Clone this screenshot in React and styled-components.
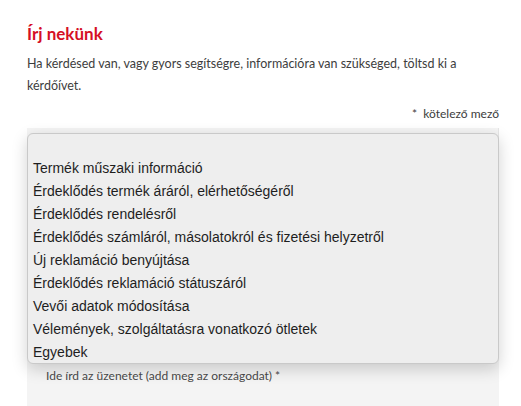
import styled, { createGlobalStyle } from "styled-components";

const GlobalStyle = createGlobalStyle`
  html, body {
    margin: 0;
    padding: 0;
    background: #ffffff;
  }
  body {
    font-family: Lato, "Open Sans", sans-serif;
    overflow: hidden;
  }
`;

const topics = [
  "",
  "Termék műszaki információ",
  "Érdeklődés termék áráról, elérhetőségéről",
  "Érdeklődés rendelésről",
  "Érdeklődés számláról, másolatokról és fizetési helyzetről",
  "Új reklamáció benyújtása",
  "Érdeklődés reklamáció státuszáról",
  "Vevői adatok módosítása",
  "Vélemények, szolgáltatásra vonatkozó ötletek",
  "Egyebek",
];

const Page = styled.div`
  position: relative;
  width: 521px;
  height: 406px;
  overflow: hidden;
  padding: 22px 22px 0 27px;
  box-sizing: border-box;
`;

const Title = styled.h2`
  margin: 0;
  font-family: Lato, sans-serif;
  font-weight: 700;
  font-size: 17px;
  line-height: 24px;
  color: #d50f25;
`;

const Intro = styled.p`
  margin: 7px 0 0;
  max-width: 460px;
  font-size: 12.5px;
  line-height: 22px;
  color: #3d3d3d;
`;

const Required = styled.div`
  margin-top: 9px;
  text-align: right;
  font-size: 12px;
  line-height: 16px;
  color: #3d3d3d;
`;

const Fields = styled.div`
  margin-top: 6px;
  display: flex;
  flex-direction: column;
  gap: 12px;
`;

const Field = styled.div`
  height: ${(p) => p.h}px;
  background: #f4f4f4;
  border-right: 1px solid #e6e6e6;
`;

const Textarea = styled.div`
  height: 80px;
  background: #f4f4f4;
  padding: 8px 19px;
  font-size: 12px;
  line-height: 16px;
  color: #4a4a4a;
`;

const Menu = styled.ul`
  position: absolute;
  top: 133px;
  left: 27px;
  width: 472px;
  height: 231px;
  margin: 0;
  padding: 0;
  list-style: none;
  box-sizing: border-box;
  background: #eeeeee;
  border: 1px solid #c9c9c9;
  border-radius: 6px;
  box-shadow: 0 5px 16px rgba(0, 0, 0, 0.18);
`;

const Option = styled.li`
  height: 23px;
  padding: 0 5px;
  font-family: "Liberation Sans", Arial, sans-serif;
  font-size: 14px;
  line-height: 23px;
  color: #1e1e1e;
  white-space: nowrap;
`;

export default function App() {
  return (
    <>
      <GlobalStyle />
      <Page>
        <Title>Írj nekünk</Title>
        <Intro>
          Ha kérdésed van, vagy gyors segítségre, információra van szükséged,
          töltsd ki a kérdőívet.
        </Intro>
        <Required>*&nbsp; kötelező mező</Required>
        <Fields>
          <Field h={46} />
          <Field h={46} />
          <Field h={46} />
          <Field h={46} />
          <Textarea>Ide írd az üzenetet (add meg az országodat) *</Textarea>
        </Fields>
        <Menu>
          {topics.map((t, i) => (
            <Option key={i}>{t || "\u00a0"}</Option>
          ))}
        </Menu>
      </Page>
    </>
  );
}
